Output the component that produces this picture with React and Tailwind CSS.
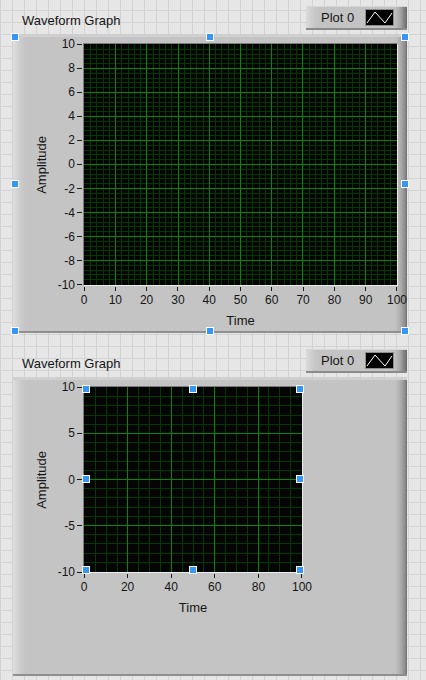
import React from "react";

const Handle = ({ className }) => (
  <div className={`absolute h-[8px] w-[8px] border border-white bg-[#3597f3] ${className}`} />
);

// LabVIEW-style plot area: minor + major grid, edge lines left to the border
const PlotGrid = ({ w, h, xDiv, yDiv, xMajor, yMajor }) => {
  const minor = [];
  const major = [];
  for (let i = 1; i < xDiv; i++) {
    const x = Math.round((i * (w - 1)) / xDiv) + 0.5;
    (i % xMajor === 0 ? major : minor).push(`M${x} 0V${h}`);
  }
  for (let i = 1; i < yDiv; i++) {
    const y = Math.round((i * (h - 1)) / yDiv) + 0.5;
    (i % yMajor === 0 ? major : minor).push(`M0 ${y}H${w}`);
  }
  return (
    <svg width={w} height={h} className="block" shapeRendering="crispEdges">
      <rect width={w} height={h} fill="#050505" />
      <path d={minor.join("")} stroke="#033803" strokeWidth="1" fill="none" />
      <path d={major.join("")} stroke="#078607" strokeWidth="1" fill="none" />
    </svg>
  );
};

const Legend = () => (
  <div className="flex h-[24px] w-[101px] items-center border-t border-b-2 border-t-[#d6d6d6] border-b-[#8a8a8a] bg-[linear-gradient(to_right,#dadada,#c8c8c8_8px,#c3c3c3_12px,#c3c3c3_calc(100%_-_13px),#a8a8a8_calc(100%_-_7px),#7a7a7a_calc(100%_-_2px),#6a6a6a)] pl-[15px]">
    <span className="leading-[16px]">Plot 0</span>
    <div className="ml-[11px] h-[17px] w-[29px] border border-[#8e8e8e] bg-black">
      <svg width="27" height="15" className="block">
        <polyline points="1,13 9,2 19,13 26,3" fill="none" stroke="#ffffff" strokeWidth="1" />
      </svg>
    </div>
  </div>
);

const Graph = ({ plotW, plotH, xLabels, yLabels, xDiv, yDiv, xMajor, yMajor, frameHandles, plotHandles, className }) => (
  <div className={`w-[394px] ${className || ""}`}>
    <div className="flex h-[28px] items-start pl-[9px]">
      <span className="mt-[7px] leading-[16px]">Waveform Graph</span>
      <div className="ml-auto">
        <Legend />
      </div>
    </div>

    <div className="relative">
      <div className="h-[299px] border-t-[3px] border-b-2 border-t-[#cfcfcf] border-b-[#8f8f8f] bg-[linear-gradient(to_right,#dedede,#cfcfcf_6px,#c4c4c4_12px,#c3c3c3_calc(100%_-_12px),#b0b0b0_calc(100%_-_7px),#8c8c8c_calc(100%_-_2px),#6e6e6e)]">
        <div className="flex pl-[21px] pt-[6px]">
          <div className="flex w-[16px] items-center justify-center" style={{ height: plotH + 2 }}>
            <span className="rotate-180 whitespace-nowrap leading-[16px] [writing-mode:vertical-rl]">Amplitude</span>
          </div>
          <div className="flex w-[33px] flex-col justify-between py-[1px] text-[12px]" style={{ height: plotH + 2 }}>
            {yLabels.map((l) => (
              <div key={l} className="flex h-0 items-center justify-end">
                <span className="whitespace-nowrap leading-[14px]">{l}</span>
                <span className="ml-[2px] mr-[1px] h-px w-[5px] bg-[#1a1a1a]" />
              </div>
            ))}
          </div>
          <div className="flex flex-col">
            <div className="relative">
              <div className="border border-t-[#7c7c7c] border-l-[#7c7c7c] border-b-[#ececec] border-r-[#ececec]">
                <PlotGrid w={plotW} h={plotH} xDiv={xDiv} yDiv={yDiv} xMajor={xMajor} yMajor={yMajor} />
              </div>
              {plotHandles && (
                <>
                  <Handle className="left-[-1px] top-[-1px]" />
                  <Handle className="left-[106px] top-[-1px]" />
                  <Handle className="left-[213px] top-[-1px]" />
                  <Handle className="left-[-1px] top-[89px]" />
                  <Handle className="left-[213px] top-[89px]" />
                  <Handle className="left-[-1px] top-[180px]" />
                  <Handle className="left-[106px] top-[180px]" />
                  <Handle className="left-[213px] top-[180px]" />
                </>
              )}
            </div>
            <div className="flex justify-between px-[1px] text-[12px]">
              {xLabels.map((l) => (
                <div key={l} className="flex w-0 flex-col items-center">
                  <span className="mt-[1px] h-[4px] w-px bg-[#1a1a1a]" />
                  <span className="mt-[2px] whitespace-nowrap leading-[14px]">{l}</span>
                </div>
              ))}
            </div>
            <div className="mt-[6px] text-center leading-[16px]">Time</div>
          </div>
        </div>
      </div>
      {frameHandles && (
        <>
          <Handle className="left-[-2px] top-[-1px]" />
          <Handle className="left-[193px] top-[-1px]" />
          <Handle className="left-[388px] top-[-1px]" />
          <Handle className="left-[-2px] top-[146px]" />
          <Handle className="left-[388px] top-[146px]" />
          <Handle className="left-[-2px] top-[293px]" />
          <Handle className="left-[193px] top-[293px]" />
          <Handle className="left-[388px] top-[293px]" />
        </>
      )}
    </div>
  </div>
);

export default function App() {
  return (
    <div className="min-h-screen w-full bg-[#e6e6e6] bg-[linear-gradient(to_right,#d2d2d2_1px,transparent_1px),linear-gradient(to_bottom,#d2d2d2_1px,transparent_1px)] bg-[size:12px_12px] bg-[position:0_10px] pl-[13px] pt-[6px] font-['Liberation_Sans',Arial,sans-serif] text-[13px] text-[#151515]">
      <Graph
        plotW={313}
        plotH={241}
        xLabels={[0, 10, 20, 30, 40, 50, 60, 70, 80, 90, 100]}
        yLabels={[10, 8, 6, 4, 2, 0, -2, -4, -6, -8, -10]}
        xDiv={50}
        yDiv={50}
        xMajor={5}
        yMajor={5}
        frameHandles
      />
      <Graph
        className="mt-[16px]"
        plotW={218}
        plotH={185}
        xLabels={[0, 20, 40, 60, 80, 100]}
        yLabels={[10, 5, 0, -5, -10]}
        xDiv={20}
        yDiv={20}
        xMajor={4}
        yMajor={5}
        plotHandles
      />
    </div>
  );
}
